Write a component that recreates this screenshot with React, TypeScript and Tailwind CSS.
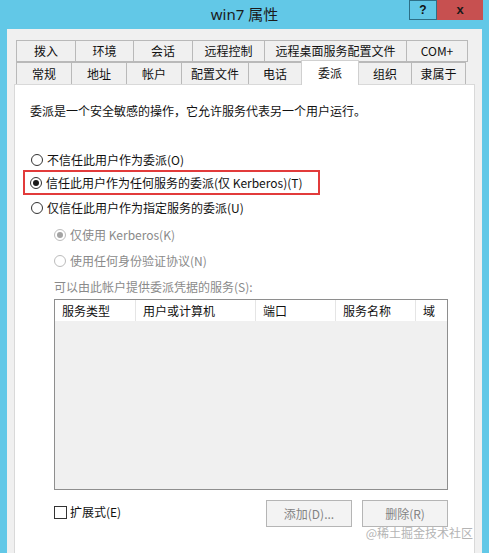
import React from "react";

const FONT = "font-['Microsoft_YaHei','Noto_Sans_CJK_SC',sans-serif]";

const row1 = [
  { label: "拨入", w: "w-[60px]" },
  { label: "环境", w: "w-[59px]" },
  { label: "会话", w: "w-[60px]" },
  { label: "远程控制", w: "w-[73px]" },
  { label: "远程桌面服务配置文件", w: "w-[143px]" },
  { label: "COM+", w: "w-[62px]" },
];

const row2 = [
  { label: "常规", w: "w-[56px]" },
  { label: "地址", w: "w-[56px]" },
  { label: "帐户", w: "w-[56px]" },
  { label: "配置文件", w: "w-[68px]" },
  { label: "电话", w: "w-[54px]" },
  { label: "委派", w: "w-[58px]", active: true },
  { label: "组织", w: "w-[54px]" },
  { label: "隶属于", w: "w-[55px]" },
];

const Radio: React.FC<{ checked?: boolean; disabled?: boolean; label: string }> = ({ checked, disabled, label }) => (
  <div className="flex items-center gap-[4px] h-[20px]">
    <span
      className={`w-[12px] h-[12px] rounded-full border bg-white flex items-center justify-center ${
        disabled ? "border-[#bcbcbc]" : "border-[#333333]"
      }`}
    >
      {checked && <span className={`w-[6px] h-[6px] rounded-full ${disabled ? "bg-[#a3a3a3]" : "bg-[#1a1a1a]"}`} />}
    </span>
    <span className={disabled ? "text-[#8a8a8a]" : "text-[#111]"}>{label}</span>
  </div>
);

export default function App() {
  return (
    <div className={`w-[489px] h-[553px] bg-[#62c8e7] flex flex-col overflow-hidden text-[12px] ${FONT}`}>
      {/* title bar */}
      <div className="h-[29px] grid grid-cols-[1fr_auto_1fr] shrink-0">
        <div />
        <div className="text-[15px] leading-[29px] text-[#1b1b1b] font-['Segoe_UI','Noto_Sans','Noto_Sans_CJK_SC',sans-serif]">
          win7 属性
        </div>
        <div className="flex justify-end items-start pr-[6px]">
          <div className="w-[28px] h-[20px] border border-[#2d6f86] bg-[#62c8e7] flex items-center justify-center text-[12px] font-bold text-[#111] font-['Liberation_Sans',sans-serif]">
            ?
          </div>
          <div className="w-[46px] h-[20px] bg-[#c75050] flex items-center justify-center text-[13px] font-bold text-[#1a1a1a] font-['Liberation_Sans',sans-serif]">
            x
          </div>
        </div>
      </div>

      {/* dialog body */}
      <div className="flex-1 mx-[7px] bg-[#f0f0f0] pt-[11px] px-[7px] flex flex-col">
        {/* tabs */}
        <div className="flex ml-[2px] h-[22px]">
          {row1.map((t) => (
            <div
              key={t.label}
              className={`${t.w} h-[22px] border border-[#b9b9b9] -ml-px first:ml-0 flex items-center justify-center text-[#111]`}
            >
              {t.label}
            </div>
          ))}
        </div>
        <div className="flex ml-[2px] h-[22px]">
          {row2.map((t) =>
            t.active ? (
              <div
                key={t.label}
                className={`${t.w} h-[25px] -mt-[2px] -ml-px relative z-10 bg-white border border-b-0 border-[#d0d0d0] flex justify-center pt-[3px] text-[#111]`}
              >
                {t.label}
              </div>
            ) : (
              <div
                key={t.label}
                className={`${t.w} h-[22px] border-t border-l border-r border-[#b9b9b9] -ml-px first:ml-0 flex items-center justify-center text-[#111]`}
              >
                {t.label}
              </div>
            )
          )}
        </div>

        {/* tab page */}
        <div className="flex-1 bg-white border border-b-0 border-[#d9d9d9] relative flex flex-col">
          <div className="pl-[15px] mt-[18px] leading-[16px] text-[#111]">
            委派是一个安全敏感的操作，它允许服务代表另一个用户运行。
          </div>

          <div className="pl-[16px] mt-[31px]">
            <Radio label="不信任此用户作为委派(O)" />
          </div>
          <div className="ml-[8px] w-[297px] h-[25px] border-2 border-[#e23b3b] flex items-center pl-[5px]">
            <Radio checked label="信任此用户作为任何服务的委派(仅 Kerberos)(T)" />
          </div>
          <div className="pl-[16px] mt-[3px]">
            <Radio label="仅信任此用户作为指定服务的委派(U)" />
          </div>

          <div className="pl-[39px] flex flex-col">
            <div className="mt-[7px]">
              <Radio checked disabled label="仅使用 Kerberos(K)" />
            </div>
            <div className="mt-[6px]">
              <Radio disabled label="使用任何身份验证协议(N)" />
            </div>
            <div className="mt-[8px] leading-[16px] text-[#8a8a8a]">可以由此帐户提供委派凭据的服务(S):</div>

            <div className="mt-[4px] w-[394px] h-[191px] border border-[#8e8e8e] bg-[#f0f0f0] flex flex-col">
              <div className="flex h-[21px] text-[#111]">
                <div className="w-[81px] bg-white border-r border-[#e5e5e5] pl-[7px] flex items-center">服务类型</div>
                <div className="w-[120px] bg-white border-r border-[#e5e5e5] pl-[7px] flex items-center">用户或计算机</div>
                <div className="w-[80px] bg-white border-r border-[#e5e5e5] pl-[7px] flex items-center">端口</div>
                <div className="w-[80px] bg-white border-r border-[#e5e5e5] pl-[7px] flex items-center">服务名称</div>
                <div className="flex-1 bg-white pl-[7px] flex items-center">域</div>
              </div>
            </div>

            <div className="mt-[10px] flex items-start w-[394px]">
              <div className="flex items-center gap-[3px] h-[24px]">
                <span className="w-[13px] h-[13px] border border-[#333] bg-white" />
                <span className="text-[#111]">扩展式(E)</span>
              </div>
              <div className="ml-auto flex gap-[10px]">
                <div className="w-[86px] h-[27px] border border-[#b5b5b5] bg-[#f3f3f3] flex items-center justify-center text-[#838383]">
                  添加(D)...
                </div>
                <div className="w-[86px] h-[27px] border border-[#b5b5b5] bg-[#f3f3f3] flex items-center justify-center text-[#838383]">
                  删除(R)
                </div>
              </div>
            </div>
          </div>

          {/* watermark */}
          <div className="absolute right-[1px] top-[440px] text-[12px] text-[#b4b4b4] leading-[16px]">@稀土掘金技术社区</div>
        </div>
      </div>
    </div>
  );
}
